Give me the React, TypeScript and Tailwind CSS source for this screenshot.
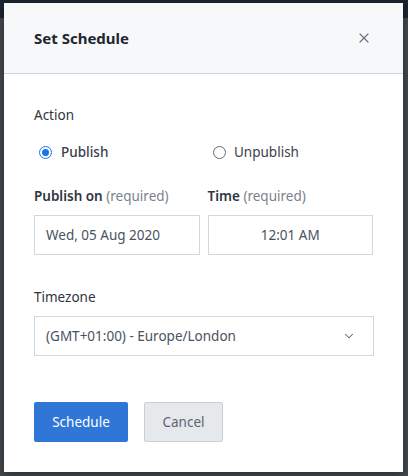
import { X, ChevronDown } from 'lucide-react'

export default function App() {
  return (
    <div className="relative w-[408px] h-[476px] overflow-hidden bg-[#43484e] font-['Noto_Sans',sans-serif]">
      <div className="h-[18px] bg-[#1b2430]" />
      <div className="absolute left-[4px] top-[3px] w-[399px] h-[469px] bg-white shadow-[0_2px_8px_rgba(0,0,0,0.4)]">
        <div className="flex items-center justify-between h-[71px] px-[30px] bg-[#f7f8fa] border-b border-[#d0d5da]">
          <h1 className="text-[15px] font-bold text-[#1f2632]">Set Schedule</h1>
          <button className="text-[#6b7385] mr-[1px]">
            <X size={16} strokeWidth={1.8} />
          </button>
        </div>
        <div className="px-[30px] pt-[31px] text-[13.5px]">
          <div className="text-[#2f3540]">Action</div>
          <div className="flex mt-[16px] h-[22px] items-center">
            <label className="flex items-center w-[179px] pl-[5px]">
              <span className="w-[13px] h-[13px] rounded-full border-[1.5px] border-[#1a73e8] flex items-center justify-center">
                <span className="w-[7px] h-[7px] rounded-full bg-[#1a73e8]" />
              </span>
              <span className="ml-[9px] font-medium text-[#3a404c]">Publish</span>
            </label>
            <label className="flex items-center">
              <span className="w-[13px] h-[13px] rounded-full border border-[#666a70]" />
              <span className="ml-[8px] text-[#3a404c]">Unpublish</span>
            </label>
          </div>
          <div className="flex gap-[8px] mt-[23px]">
            <div className="w-[166px]">
              <div className="leading-[20px]">
                <span className="font-semibold text-[#2f3540]">Publish on</span>{' '}
                <span className="text-[#7a818c]">(required)</span>
              </div>
              <div className="mt-[9px] h-[40px] border border-[#d0d7de] flex items-center px-[11px] text-[#4a525e]">
                Wed, 05 Aug 2020
              </div>
            </div>
            <div className="w-[166px]">
              <div className="leading-[20px]">
                <span className="font-semibold text-[#2f3540]">Time</span>{' '}
                <span className="text-[#7a818c]">(required)</span>
              </div>
              <div className="mt-[9px] h-[40px] border border-[#d0d7de] flex items-center justify-center text-[#4a525e]">
                12:01 AM
              </div>
            </div>
          </div>
          <div className="mt-[32px] leading-[20px] text-[#2f3540]">Timezone</div>
          <div className="mt-[9px] w-[340px] h-[40px] border border-[#d0d7de] flex items-center justify-between pl-[11px] pr-[17px] text-[#4a525e]">
            <span>(GMT+01:00) - Europe/London</span>
            <ChevronDown size={14} strokeWidth={1.8} className="text-[#5a6270]" />
          </div>
          <div className="flex gap-[16px] mt-[46px]">
            <button className="w-[94px] h-[40px] rounded-[2px] bg-[#2f76d6] text-white">Schedule</button>
            <button className="w-[79px] h-[40px] rounded-[2px] bg-[#e5e9ec] border border-[#c9d0d6] text-[#5a6470]">Cancel</button>
          </div>
        </div>
      </div>
    </div>
  )
}
